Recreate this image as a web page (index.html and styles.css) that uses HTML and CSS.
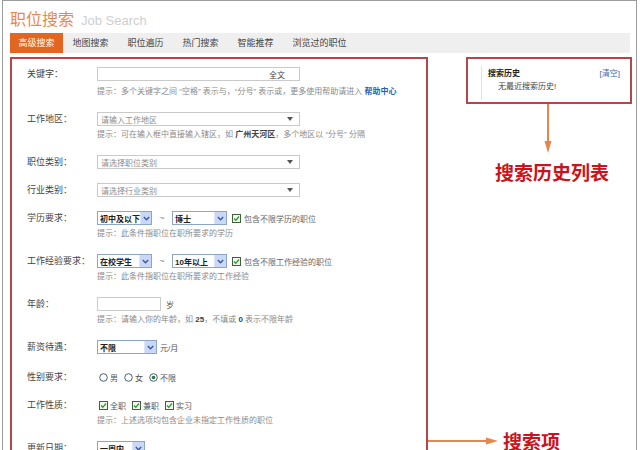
FILE: index.html
```html
<!DOCTYPE html>
<html lang="zh-CN">
<head>
<meta charset="utf-8">
<title>职位搜索</title>
<link rel="stylesheet" href="styles.css">
</head>
<body>
<div class="frame">
  <div class="header"><span class="title">职位搜索</span><span class="title-en">Job Search</span></div>
  <div class="tabs">
    <span class="tab active">高级搜索</span>
    <span class="tab">地图搜索</span>
    <span class="tab">职位遍历</span>
    <span class="tab">热门搜索</span>
    <span class="tab">智能推荐</span>
    <span class="tab">浏览过的职位</span>
  </div>
  <div class="main">
    <div class="form-box">
      <div class="row row-first">
        <div class="label">关键字：</div>
        <div class="field">
          <div class="line"><span class="input wide"><span class="suffix">全文</span></span></div>
          <div class="hint">提示：多个关键字之间 “空格” 表示与，“分号” 表示或，更多使用帮助请进入 <b class="link">帮助中心</b></div>
        </div>
      </div>
      <div class="row">
        <div class="label">工作地区：</div>
        <div class="field">
          <div class="line"><span class="input wide combo"><span class="ph">请输入工作地区</span><span class="tri"></span></span></div>
          <div class="hint">提示：可在输入框中直接输入辖区，如 <b>广州天河区</b>，多个地区以 “分号” 分隔</div>
        </div>
      </div>
      <div class="row">
        <div class="label">职位类别：</div>
        <div class="field">
          <div class="line"><span class="input wide combo"><span class="ph">请选择职位类别</span><span class="tri"></span></span></div>
        </div>
      </div>
      <div class="row">
        <div class="label">行业类别：</div>
        <div class="field">
          <div class="line"><span class="input wide combo"><span class="ph">请选择行业类别</span><span class="tri"></span></span></div>
        </div>
      </div>
      <div class="row">
        <div class="label">学历要求：</div>
        <div class="field">
          <div class="line">
            <span class="sel w55"><span class="sel-text">初中及以下</span><span class="sel-btn"><svg width="7" height="5" viewBox="0 0 7 5"><path d="M0.8 1 L3.5 3.8 L6.2 1" fill="none" stroke="#3b5a9c" stroke-width="1.4"/></svg></span></span>
            <span class="tilde">~</span>
            <span class="sel w55"><span class="sel-text">博士</span><span class="sel-btn"><svg width="7" height="5" viewBox="0 0 7 5"><path d="M0.8 1 L3.5 3.8 L6.2 1" fill="none" stroke="#3b5a9c" stroke-width="1.4"/></svg></span></span>
            <span class="check"><svg class="cb" width="9" height="9" viewBox="0 0 9 9"><rect x="0.5" y="0.5" width="8" height="8" fill="#f4f6f0" stroke="#3f5f3f"/><path d="M2 4.5 L3.8 6.3 L7 2.5" fill="none" stroke="#2a9a2a" stroke-width="1.3"/></svg>包含不限学历的职位</span>
          </div>
          <div class="hint">提示：此条件指职位在职所要求的学历</div>
        </div>
      </div>
      <div class="row">
        <div class="label">工作经验要求：</div>
        <div class="field">
          <div class="line">
            <span class="sel w55"><span class="sel-text">在校学生</span><span class="sel-btn"><svg width="7" height="5" viewBox="0 0 7 5"><path d="M0.8 1 L3.5 3.8 L6.2 1" fill="none" stroke="#3b5a9c" stroke-width="1.4"/></svg></span></span>
            <span class="tilde">~</span>
            <span class="sel w55"><span class="sel-text">10年以上</span><span class="sel-btn"><svg width="7" height="5" viewBox="0 0 7 5"><path d="M0.8 1 L3.5 3.8 L6.2 1" fill="none" stroke="#3b5a9c" stroke-width="1.4"/></svg></span></span>
            <span class="check"><svg class="cb" width="9" height="9" viewBox="0 0 9 9"><rect x="0.5" y="0.5" width="8" height="8" fill="#f4f6f0" stroke="#3f5f3f"/><path d="M2 4.5 L3.8 6.3 L7 2.5" fill="none" stroke="#2a9a2a" stroke-width="1.3"/></svg>包含不限工作经验的职位</span>
          </div>
          <div class="hint">提示：此条件指职位在职所要求的工作经验</div>
        </div>
      </div>
      <div class="row">
        <div class="label">年龄：</div>
        <div class="field">
          <div class="line"><span class="input w64"></span><span class="unit">岁</span></div>
          <div class="hint">提示：请输入你的年龄，如 <b>25</b>，不填或 <b>0</b> 表示不限年龄</div>
        </div>
      </div>
      <div class="row row-salary">
        <div class="label">薪资待遇：</div>
        <div class="field">
          <div class="line">
            <span class="sel w60"><span class="sel-text">不限</span><span class="sel-btn"><svg width="7" height="5" viewBox="0 0 7 5"><path d="M0.8 1 L3.5 3.8 L6.2 1" fill="none" stroke="#3b5a9c" stroke-width="1.4"/></svg></span></span>
            <span class="unit tight">元/月</span>
          </div>
        </div>
      </div>
      <div class="row">
        <div class="label">性别要求：</div>
        <div class="field">
          <div class="line opts">
            <span class="opt"><svg class="rd" width="9" height="9" viewBox="0 0 9 9"><circle cx="4.5" cy="4.5" r="3.8" fill="#fff" stroke="#4a5f7a"/></svg>男</span>
            <span class="opt"><svg class="rd" width="9" height="9" viewBox="0 0 9 9"><circle cx="4.5" cy="4.5" r="3.8" fill="#fff" stroke="#4a5f7a"/></svg>女</span>
            <span class="opt"><svg class="rd" width="9" height="9" viewBox="0 0 9 9"><circle cx="4.5" cy="4.5" r="3.8" fill="#fff" stroke="#4a5f7a"/><circle cx="4.5" cy="4.5" r="1.8" fill="#2a7a3a"/></svg>不限</span>
          </div>
        </div>
      </div>
      <div class="row">
        <div class="label">工作性质：</div>
        <div class="field">
          <div class="line opts">
            <span class="opt"><svg class="cb" width="9" height="9" viewBox="0 0 9 9"><rect x="0.5" y="0.5" width="8" height="8" fill="#f4f6f0" stroke="#3f5f3f"/><path d="M2 4.5 L3.8 6.3 L7 2.5" fill="none" stroke="#2a9a2a" stroke-width="1.3"/></svg>全职</span>
            <span class="opt"><svg class="cb" width="9" height="9" viewBox="0 0 9 9"><rect x="0.5" y="0.5" width="8" height="8" fill="#f4f6f0" stroke="#3f5f3f"/><path d="M2 4.5 L3.8 6.3 L7 2.5" fill="none" stroke="#2a9a2a" stroke-width="1.3"/></svg>兼职</span>
            <span class="opt"><svg class="cb" width="9" height="9" viewBox="0 0 9 9"><rect x="0.5" y="0.5" width="8" height="8" fill="#f4f6f0" stroke="#3f5f3f"/><path d="M2 4.5 L3.8 6.3 L7 2.5" fill="none" stroke="#2a9a2a" stroke-width="1.3"/></svg>实习</span>
          </div>
          <div class="hint">提示：上述选项均包含企业未指定工作性质的职位</div>
        </div>
      </div>
      <div class="row">
        <div class="label">更新日期：</div>
        <div class="field">
          <div class="line">
            <span class="sel w48"><span class="sel-text">一周内</span><span class="sel-btn"><svg width="7" height="5" viewBox="0 0 7 5"><path d="M0.8 1 L3.5 3.8 L6.2 1" fill="none" stroke="#3b5a9c" stroke-width="1.4"/></svg></span></span>
          </div>
        </div>
      </div>
      <div class="anno-bottom">
        <svg width="71" height="10" viewBox="0 0 71 10"><line x1="0" y1="5" x2="60" y2="5" stroke="#e8844d" stroke-width="2"/><polygon points="58,1.5 70,5 58,8.5" fill="#e8844d"/></svg>
        <span class="anno-text">搜索项</span>
      </div>
    </div>
    <div class="side">
      <div class="history">
        <div class="history-panel">
          <div class="history-head"><b>搜索历史</b><span class="clear">[清空]</span></div>
          <div class="history-empty">无最近搜索历史!</div>
        </div>
      </div>
      <svg class="arrow-v" width="166" height="50" viewBox="0 0 166 50"><line x1="82" y1="0" x2="82" y2="39" stroke="#e8844d" stroke-width="2"/><polygon points="78.5,37 85.5,37 82,49" fill="#e8844d"/></svg>
      <div class="anno-text side-label">搜索历史列表</div>
    </div>
  </div>
</div>
</body>
</html>
```

FILE: styles.css
```css
html, body {
  margin: 0;
  padding: 0;
  background: #fff;
}
body {
  font-family: "Liberation Sans", "Noto Sans CJK SC", sans-serif;
  color: #333;
  overflow: hidden;
}
.frame {
  margin-left: 2px;
  width: 622px;
  height: 600px;
  padding: 0 4px 0 7px;
  border: 1px solid #9c9c9c;
}
.header {
  padding-top: 7px;
  line-height: 20px;
  height: 20px;
  margin-bottom: 5px;
  white-space: nowrap;
}
.title {
  font-family: "Noto Sans CJK SC", sans-serif;
  font-size: 16px;
  color: #e8874f;
}
.title-en {
  margin-left: 7px;
  font-family: "Liberation Sans", sans-serif;
  font-size: 13px;
  color: #cfcfcf;
}
.tabs {
  display: flex;
  width: 620px;
  height: 20px;
  background: #efefef;
}
.tab {
  font-family: "Noto Sans CJK SC", sans-serif;
  font-size: 9px;
  line-height: 20px;
  padding: 0 9.5px;
  color: #444;
  white-space: nowrap;
}
.tab.active {
  background: #e2661f;
  color: #fff;
  padding: 0 8.5px;
}
.main {
  display: flex;
  align-items: flex-start;
  margin-top: 4px;
}
.form-box {
  position: relative;
  width: 401px;
  height: 420px;
  border: 2px solid #b4474d;
  padding: 8px 0 0 15px;
}
.row {
  display: grid;
  grid-template-columns: 70px auto;
  margin-bottom: 14px;
}
.row-first .hint {
  margin-top: 4px;
}
.row-salary {
  margin-bottom: 16px;
}
.label {
  font-family: "Noto Sans CJK SC", sans-serif;
  font-size: 9px;
  line-height: 14px;
  color: #444;
  white-space: nowrap;
}
.line {
  display: flex;
  align-items: center;
  gap: 5px;
  height: 14px;
  font-size: 8px;
  white-space: nowrap;
}
.hint {
  margin-top: 2px;
  font-size: 8px;
  line-height: 13px;
  color: #8a8a8a;
  white-space: nowrap;
}
.hint b {
  color: #444;
}
.hint .link {
  color: #2b5fae;
}
.input {
  display: flex;
  align-items: center;
  height: 14px;
  box-sizing: border-box;
  border: 1px solid #cacaca;
  background: #fff;
}
.wide {
  width: 203px;
}
.w64 {
  width: 64px;
}
.suffix {
  margin-left: auto;
  margin-right: 14px;
  font-size: 8px;
  color: #444;
}
.combo .ph {
  padding-left: 3px;
  font-size: 8px;
  color: #8c8c8c;
}
.tri {
  margin-left: auto;
  margin-right: 6px;
  width: 0;
  height: 0;
  border-left: 3.5px solid transparent;
  border-right: 3.5px solid transparent;
  border-top: 4px solid #555;
}
.sel {
  display: flex;
  align-items: center;
  height: 14px;
  box-sizing: border-box;
  border: 1px solid #8ea6c6;
  background: #fff;
  padding-left: 2px;
}
.w55 {
  width: 55px;
}
.w60 {
  width: 60px;
}
.w48 {
  width: 48px;
}
.sel-text {
  font-size: 8px;
  font-weight: bold;
  color: #222;
}
.sel-btn {
  margin-left: auto;
  display: flex;
  align-items: center;
  justify-content: center;
  width: 11px;
  height: 12px;
  background: #c9d8f6;
  border-left: 1px solid #dde6f8;
}
.tilde {
  width: 10px;
  text-align: center;
  font-size: 9px;
  color: #888;
}
.check {
  display: flex;
  align-items: center;
  gap: 3px;
  color: #666;
  font-size: 8px;
}
.unit {
  font-size: 8px;
  color: #555;
}
.unit.tight {
  margin-left: -2px;
}
.opts {
  gap: 6px;
  padding-left: 2px;
}
.opt {
  display: flex;
  align-items: center;
  gap: 2px;
  font-size: 8px;
  color: #555;
}
.opts .opt + .opt {
  margin-left: 0;
}
.side {
  margin-left: 38px;
  width: 166px;
}
.history {
  height: 43px;
  border: 2px solid #b4474d;
  padding: 7px 10px 0 13px;
  box-sizing: content-box;
  height: 36px;
}
.history-panel {
  border-left: 1px solid #e2e2e2;
  padding: 1px 0 0 6px;
  height: 33px;
}
.history-head {
  display: flex;
  justify-content: space-between;
  font-size: 8px;
  line-height: 13px;
  color: #222;
}
.clear {
  color: #3a6ab0;
}
.history-empty {
  padding-left: 10px;
  font-size: 8px;
  line-height: 13px;
  color: #444;
}
.arrow-v {
  display: block;
}
.anno-text {
  font-family: "Noto Sans CJK SC", sans-serif;
  font-weight: bold;
  font-size: 19px;
  line-height: 20px;
  color: #c8141c;
  white-space: nowrap;
}
.side-label {
  margin-top: 8px;
  margin-left: 29px;
}
.anno-bottom {
  position: absolute;
  left: 416px;
  top: 372px;
  display: flex;
  align-items: center;
  gap: 4px;
  height: 20px;
}
```
